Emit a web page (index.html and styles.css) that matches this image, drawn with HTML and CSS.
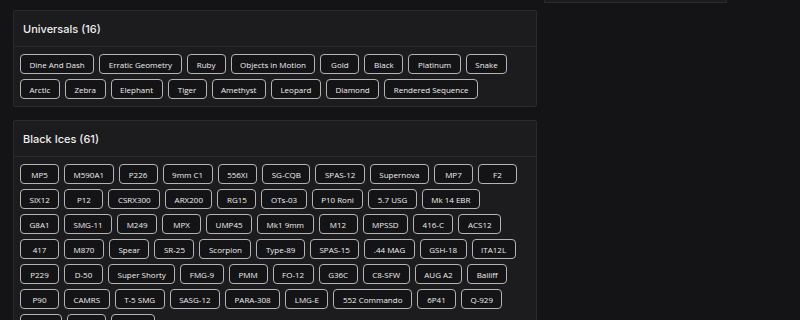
FILE: index.html
```html
<!DOCTYPE html>
<html>
<head>
<meta charset="utf-8">
<link rel="stylesheet" href="styles.css">
</head>
<body>
<div class="layout">
  <div class="main">
    <section class="card">
      <header class="card-head">Universals (16)</header>
      <div class="tags">
        <span class="tag">Dine And Dash</span>
        <span class="tag">Erratic Geometry</span>
        <span class="tag">Ruby</span>
        <span class="tag">Objects in Motion</span>
        <span class="tag">Gold</span>
        <span class="tag">Black</span>
        <span class="tag">Platinum</span>
        <span class="tag">Snake</span>
        <span class="tag">Arctic</span>
        <span class="tag">Zebra</span>
        <span class="tag">Elephant</span>
        <span class="tag">Tiger</span>
        <span class="tag">Amethyst</span>
        <span class="tag">Leopard</span>
        <span class="tag">Diamond</span>
        <span class="tag">Rendered Sequence</span>
      </div>
    </section>
    <section class="card">
      <header class="card-head">Black Ices (61)</header>
      <div class="tags">
        <span class="tag">MP5</span>
        <span class="tag">M590A1</span>
        <span class="tag">P226</span>
        <span class="tag">9mm C1</span>
        <span class="tag">556XI</span>
        <span class="tag">SG-CQB</span>
        <span class="tag">SPAS-12</span>
        <span class="tag">Supernova</span>
        <span class="tag">MP7</span>
        <span class="tag">F2</span>
        <span class="tag">SIX12</span>
        <span class="tag">P12</span>
        <span class="tag">CSRX300</span>
        <span class="tag">ARX200</span>
        <span class="tag">RG15</span>
        <span class="tag">OTs-03</span>
        <span class="tag">P10 Roni</span>
        <span class="tag">5.7 USG</span>
        <span class="tag">Mk 14 EBR</span>
        <span class="tag">G8A1</span>
        <span class="tag">SMG-11</span>
        <span class="tag">M249</span>
        <span class="tag">MPX</span>
        <span class="tag">UMP45</span>
        <span class="tag">Mk1 9mm</span>
        <span class="tag">M12</span>
        <span class="tag">MPSSD</span>
        <span class="tag">416-C</span>
        <span class="tag">ACS12</span>
        <span class="tag">417</span>
        <span class="tag">M870</span>
        <span class="tag">Spear</span>
        <span class="tag">SR-25</span>
        <span class="tag">Scorpion</span>
        <span class="tag">Type-89</span>
        <span class="tag">SPAS-15</span>
        <span class="tag">.44 MAG</span>
        <span class="tag">GSH-18</span>
        <span class="tag">ITA12L</span>
        <span class="tag">P229</span>
        <span class="tag">D-50</span>
        <span class="tag">Super Shorty</span>
        <span class="tag">FMG-9</span>
        <span class="tag">PMM</span>
        <span class="tag">FO-12</span>
        <span class="tag">G36C</span>
        <span class="tag">C8-SFW</span>
        <span class="tag">AUG A2</span>
        <span class="tag">Bailiff</span>
        <span class="tag">P90</span>
        <span class="tag">CAMRS</span>
        <span class="tag">T-5 SMG</span>
        <span class="tag">SASG-12</span>
        <span class="tag">PARA-308</span>
        <span class="tag">LMG-E</span>
        <span class="tag">552 Commando</span>
        <span class="tag">6P41</span>
        <span class="tag">Q-929</span>
        <span class="tag">L85A2</span>
        <span class="tag">AR33</span>
        <span class="tag">M1014</span>
      </div>
    </section>
  </div>
  <aside class="side">
    <div class="side-card"></div>
  </aside>
</div>
</body>
</html>
```

FILE: styles.css
```css
html, body {
  margin: 0;
  padding: 0;
  background: #141316;
  height: 100%;
  overflow: hidden;
}
body {
  font-family: "Inter", "Lato", sans-serif;
  color: #e6e6e6;
}
.layout {
  display: flex;
  align-items: flex-start;
  gap: 7px;
  padding-left: 13px;
}
.main {
  width: 524px;
  display: flex;
  flex-direction: column;
  gap: 13px;
  padding-top: 10px;
}
.card {
  background: #1c1b1e;
  border: 1px solid #2a292c;
  border-radius: 2px;
}
.card-head {
  height: 36px;
  box-sizing: border-box;
  padding: 0 9px;
  display: flex;
  align-items: center;
  font-size: 11px;
  font-weight: 500;
  color: #efefef;
  border-bottom: 1px solid #2a292c;
}
.tags {
  display: flex;
  flex-wrap: wrap;
  gap: 5px 5px;
  padding: 7px 14px 7px 6px;
}
.tag {
  height: 20px;
  min-width: 39px;
  box-sizing: border-box;
  display: inline-flex;
  align-items: center;
  justify-content: center;
  padding: 0 8.5px;
  border: 1.5px solid #b4b4b4;
  border-radius: 4px;
  background: #141316;
  font-family: "Open Sans", "Inter", sans-serif;
  font-size: 8px;
  font-weight: 500;
  color: #efefef;
  white-space: nowrap;
}
.side {
  width: 183px;
}
.side-card {
  height: 2px;
  background: #1c1b1e;
  border: 1px solid #2a292c;
  border-top: none;
}
```
